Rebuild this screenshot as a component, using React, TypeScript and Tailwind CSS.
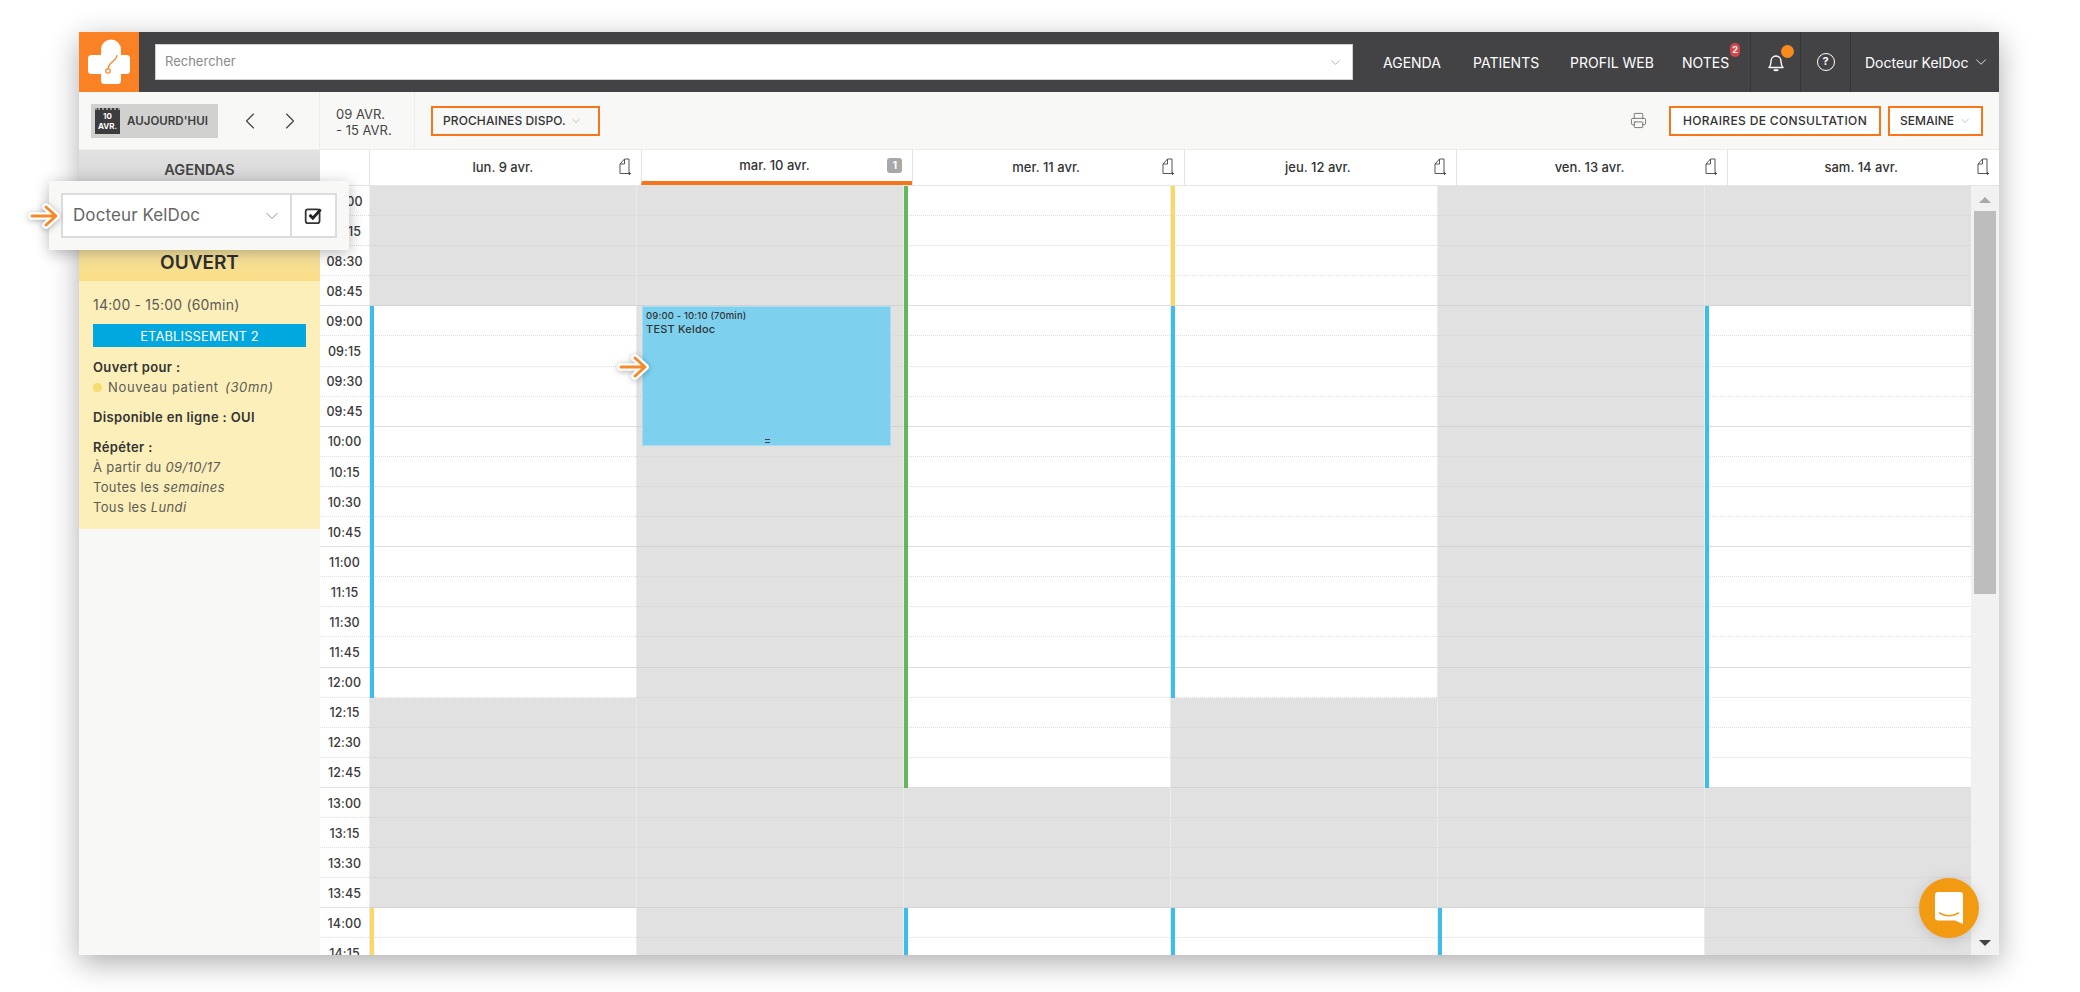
import React from "react";
import { ChevronDown, ChevronLeft, ChevronRight, Printer } from "lucide-react";

const hours = ["08:00","08:15","08:30","08:45","09:00","09:15","09:30","09:45","10:00","10:15","10:30","10:45","11:00","11:15","11:30","11:45","12:00","12:15","12:30","12:45","13:00","13:15","13:30","13:45","14:00","14:15"];
const ROW = 30.1;

type Seg = { from: number; to: number; bar: string };
const days: { label: string; segs: Seg[] }[] = [
  { label: "lun. 9 avr.", segs: [{ from: 4, to: 16, bar: "blue" }, { from: 24, to: 25, bar: "yellow" }] },
  { label: "mar. 10 avr.", segs: [] },
  { label: "mer. 11 avr.", segs: [{ from: 0, to: 19, bar: "green" }, { from: 24, to: 25, bar: "blue" }] },
  { label: "jeu. 12 avr.", segs: [{ from: 0, to: 3, bar: "yellow" }, { from: 4, to: 16, bar: "blue" }, { from: 24, to: 25, bar: "blue" }] },
  { label: "ven. 13 avr.", segs: [{ from: 24, to: 25, bar: "blue" }] },
  { label: "sam. 14 avr.", segs: [{ from: 4, to: 19, bar: "blue" }] },
];

const barClass: Record<string, string> = {
  blue: "bg-[#3fbdea]",
  green: "bg-[#62b85c]",
  yellow: "bg-[#fbd765]",
};

function NoteIcon() {
  return (
    <svg width="12" height="18" viewBox="0 0 12 18" fill="none" stroke="#555" strokeWidth="1">
      <path d="M1 15.500V6l4.500-5H10v14.500H1Z" />
      <path d="M5.500 1v5H1" />
      <path d="M9 15.500h3M10.500 14v3" strokeWidth="1.200" />
    </svg>
  );
}

function Cell({ index, seg }: { index: number; seg?: Seg }) {
  const isHourEnd = index % 4 === 3;
  const line = seg
    ? isHourEnd ? "border-b border-b-[#dddddd]" : "border-b [border-bottom-style:dotted] border-b-[#dedede]"
    : isHourEnd ? "border-b border-b-[#d2d2d2]" : "border-b [border-bottom-style:dotted] border-b-[#d4d4d4]";
  const bg = seg ? "bg-white" : "bg-[#e1e1e1]";
  return <div className={`h-[30.1px] box-border shrink-0 border-l border-l-[#ebebeb] ${bg} ${line}`} />;
}

function Arrow({ className }: { className: string }) {
  return (
    <svg className={`${className} drop-shadow-[0_1px_3px_rgba(0,0,0,0.3)]`} width="34" height="30" viewBox="0 0 34 30" fill="none" strokeLinecap="round" strokeLinejoin="round">
      <g stroke="#ffffff" strokeWidth="7.500">
        <path d="M5 15h23M19 6l10 9-10 9" />
      </g>
      <g stroke="#f58a2c" strokeWidth="3">
        <path d="M5 15h23M19 6l10 9-10 9" />
      </g>
    </svg>
  );
}

function Boxed({ children, className }: { children: React.ReactNode; className: string }) {
  return (
    <div className={`h-[30px] box-border border-2 border-[#f8751a] flex items-center text-[12px] font-medium text-[#333] ${className}`}>
      {children}
    </div>
  );
}

export default function App() {
  return (
    <div className="w-[2080px] h-[992px] overflow-hidden bg-white pt-[32px] pl-[79px] [font-family:Inter,sans-serif]">
      <div className="relative w-[1920px] h-[923px] flex flex-col bg-[#f8f8f6] shadow-[0_8px_28px_rgba(0,0,0,0.32)]">
        {/* Top bar */}
        <header className="h-[60px] shrink-0 flex bg-[#434345] text-white">
          <div className="w-[60px] bg-[#fb8224] flex items-center justify-center">
            <svg width="60" height="60" viewBox="0 0 60 60">
              <circle cx="32" cy="17.500" r="10" fill="#fff" />
              <rect x="9" y="23" width="42" height="19" rx="3.500" fill="#fff" />
              <rect x="22" y="18" width="20" height="34" rx="3.500" fill="#fff" />
              <path fill="none" stroke="#fb8224" strokeWidth="1.200" d="M38 23c0 4-3 5-6 8-2 2-3 4-3 6" />
              <circle cx="29" cy="39" r="2.200" fill="#fff" stroke="#fb8224" strokeWidth="1.200" />
            </svg>
          </div>
          <div className="flex-1 flex items-center pl-[16px]">
            <div className="w-[1198px] h-[36px] box-border bg-white border border-[#cfcfcf] flex items-center justify-between pl-[9px] pr-[9px]">
              <span className="text-[13px] text-[#8a8a8a]">Rechercher</span>
              <ChevronDown size={15} strokeWidth={1} className="text-[#888]" />
            </div>
            <nav className="flex items-center text-[14px] ml-[30px]">
              <span className="w-[60px] whitespace-nowrap">AGENDA</span>
              <span className="ml-[30px] w-[66px] whitespace-nowrap">PATIENTS</span>
              <span className="ml-[31px] w-[87px] whitespace-nowrap">PROFIL WEB</span>
              <span className="relative ml-[25px] w-[48px] whitespace-nowrap">
                NOTES
                <span className="absolute left-[48px] -top-[9px] w-[10px] h-[14px] rounded-full bg-[#d9444b] text-[9px] leading-[14px] font-bold text-center">2</span>
              </span>
            </nav>
            <div className="ml-[20px] h-[60px] w-[50px] border-l border-[#353537] flex items-center justify-center relative">
              <svg width="20" height="20" viewBox="0 0 20 20" fill="none" stroke="#fff" strokeWidth="1.400">
                <path d="M3 15.500c1.500-1.500 2-3 2-6 0-3 2-5.500 5-5.500s5 2.500 5 5.500c0 3 .5 4.500 2 6H3Z" strokeLinejoin="round" />
                <path d="M8 17.500c.5 1 3.500 1 4 0" strokeWidth="2" />
              </svg>
              <span className="absolute left-[30px] top-[13px] w-[13px] h-[13px] rounded-full bg-[#f98a1e]" />
            </div>
            <div className="h-[60px] w-[50px] border-l border-[#353537] flex items-center justify-center">
              <span className="w-[18px] h-[18px] box-border rounded-full border-[1.500px] border-white text-[11px] leading-[15px] font-bold text-center">?</span>
            </div>
            <div className="h-[60px] flex-1 border-l border-[#353537] flex items-center pl-[14px] text-[14px] whitespace-nowrap">
              Docteur KelDoc
              <ChevronDown size={18} strokeWidth={1.100} className="ml-[3px]" />
            </div>
          </div>
        </header>

        {/* Toolbar */}
        <div className="h-[58px] shrink-0 flex items-center bg-[#f8f8f6] border-b border-[#ececea]">
          <div className="w-[241px] h-full flex items-center pl-[12px] border-r border-[#ececea]">
            <div className="w-[127px] h-[34px] bg-[#d1d1cf] flex items-center pl-[4px]">
              <div className="w-[25px] h-[26px] bg-[#3c3c3e] border-t-2 border-dotted border-[#9a9a9a] text-white text-[8px] leading-[10px] font-bold text-center pt-[1px]">
                <div>10</div>
                <div>AVR.</div>
              </div>
              <span className="ml-[7px] mt-[2px] text-[11.500px] font-semibold tracking-[0.05px] text-[#3c3c3e] whitespace-nowrap">AUJOURD'HUI</span>
            </div>
            <ChevronLeft size={28} strokeWidth={1} className="ml-[18px] text-[#444]" />
            <ChevronRight size={28} strokeWidth={1} className="ml-[12px] text-[#444]" />
          </div>
          <div className="w-[95px] h-full box-border flex items-center pl-[16px] pt-[2px] border-r border-[#ececea] text-[13px] leading-[16px] text-[#444]">
            <div>
              <div>09 AVR.</div>
              <div>- 15 AVR.</div>
            </div>
          </div>
          <Boxed className="ml-[16px] w-[169px] pl-[10px] bg-[#f8f8f6] tracking-[0.1px] whitespace-nowrap">
            PROCHAINES DISPO.
            <ChevronDown size={12} strokeWidth={1} className="ml-[4px] text-[#888]" />
          </Boxed>
          <div className="flex-1" />
          <Printer size={17} strokeWidth={1.200} className="text-[#666] mr-[22px]" />
          <Boxed className="w-[212px] bg-white justify-center tracking-[0.35px] whitespace-nowrap">HORAIRES DE CONSULTATION</Boxed>
          <Boxed className="ml-[7px] mr-[16px] w-[95px] bg-white pl-[10px] whitespace-nowrap">
            SEMAINE
            <ChevronDown size={12} strokeWidth={1} className="ml-[5px] text-[#888]" />
          </Boxed>
        </div>

        {/* Main */}
        <div className="flex-1 min-h-0 flex overflow-hidden">
          <aside className="w-[241px] shrink-0 flex flex-col bg-[#f8f8f6]">
            <div className="h-[95px] shrink-0 bg-gradient-to-b from-[#e3e3e3] to-[#bdbdbd] text-center text-[14.500px] font-semibold text-[#444] pt-[9px]">AGENDAS</div>
            <div className="h-[36px] shrink-0 bg-gradient-to-b from-[#f8e7a6] to-[#f9dc84] flex items-center justify-center text-[19px] font-semibold text-[#2f2f2f]">OUVERT</div>
            <div className="h-[248px] shrink-0 bg-[#fdefb9] px-[14px] pt-[14px] text-[13px] text-[#5b5b55] leading-[20px]">
              <div className="text-[14px] tracking-[0.2px]">14:00 - 15:00 (60min)</div>
              <div className="mt-[9px] h-[23px] bg-[#00a8df] text-white text-[13px] leading-[24px] text-center tracking-[0.1px]">ETABLISSEMENT 2</div>
              <div className="mt-[10px] font-semibold text-[#333] tracking-[0.35px]">Ouvert pour :</div>
              <div className="flex items-center tracking-[0.65px]">
                <span className="w-[9px] h-[9px] rounded-full bg-[#f6dc6c] mr-[6px]" />
                <span>Nouveau patient <i className="ml-[2px]">(30mn)</i></span>
              </div>
              <div className="mt-[10px] font-semibold text-[#333] tracking-[0.35px]">Disponible en ligne : OUI</div>
              <div className="mt-[10px] font-semibold text-[#333] tracking-[0.35px]">Répéter :</div>
              <div className="tracking-[0.35px]">À partir du <i>09/10/17</i></div>
              <div className="tracking-[0.35px]">Toutes les <i>semaines</i></div>
              <div className="tracking-[0.35px]">Tous les <i>Lundi</i></div>
            </div>
          </aside>

          <div className="flex-1 min-w-0 flex flex-col bg-white">
            {/* Day headers */}
            <div className="h-[36px] shrink-0 flex border-b border-[#e5e5e5] bg-white">
              <div className="w-[49px] shrink-0" />
              {days.map((d, i) => (
                <div key={d.label} className={`flex-1 box-border relative flex items-center justify-center pr-[5px] border-l border-[#e3e3e3] text-[13px] font-medium text-[#333] ${i === 1 ? "border-b-[4px] border-b-[#f8751a]" : ""}`}>
                  {d.label}
                  <span className="absolute right-[10px] top-[8px]">
                    {i === 1 ? (
                      <span className="block w-[15px] h-[15px] rounded-[3px] bg-[#a8a8a8] text-white text-[10px] leading-[15px] font-bold text-center">1</span>
                    ) : (
                      <NoteIcon />
                    )}
                  </span>
                </div>
              ))}
            </div>

            {/* Grid */}
            <div className="flex-1 min-h-0 flex overflow-hidden">
              <div className="w-[49px] shrink-0 bg-white">
                {hours.map((h, i) => (
                  <div key={h} className={`h-[30.1px] box-border flex items-center justify-center pt-[3px] text-[12.500px] font-medium tracking-[0.1px] text-[#3a3a3a] border-b ${i % 4 === 3 ? "border-[#e2e2e2]" : "[border-bottom-style:dotted] border-[#dcdcdc]"}`}>{h}</div>
                ))}
              </div>
              {days.map((d, di) => (
                <div key={d.label} className="w-[267px] shrink-0 relative">
                  {hours.map((h, i) => (
                    <Cell key={h} index={i} seg={d.segs.find((s) => i >= s.from && i <= s.to)} />
                  ))}
                  {d.segs.map((s) => (
                    <div
                      key={s.from}
                      className={`absolute left-[1px] w-[4px] ${barClass[s.bar]}`}
                      style={{ top: s.from * ROW, height: (s.to - s.from + 1) * ROW }}
                    />
                  ))}
                  {di === 1 && (
                    <div className="absolute left-[6px] top-[120px] w-[249px] h-[140px] box-border bg-[#7dd1ef] border border-[#a9def2] pl-[3px] pt-[2px] text-[#333]">
                      <div className="text-[9.500px] leading-[13px] font-medium tracking-[0.15px]">09:00 - 10:10 (70min)</div>
                      <div className="text-[11px] leading-[14px] font-medium tracking-[0.2px]">TEST Keldoc</div>
                      <div className="absolute left-[122px] bottom-[2px] w-[5px] h-[4px] border-y border-[#444]" />
                    </div>
                  )}
                </div>
              ))}
              {/* Scrollbar */}
              <div className="flex-1 bg-[#f1f1f1] flex flex-col items-center relative pt-[11px]">
                <div className="w-0 h-0 border-x-[6px] border-x-transparent border-b-[6px] border-b-[#a8a8a8]" />
                <div className="mt-[8px] w-[22px] h-[383px] bg-[#bdbdbd]" />
                <div className="absolute bottom-[9px] w-0 h-0 border-x-[6px] border-x-transparent border-t-[6px] border-t-[#444]" />
              </div>
            </div>
          </div>
        </div>

        {/* Floating select popup */}
        <div className="absolute left-[-30px] top-[149px] w-[300px] h-[69px] box-border bg-[#f8f8f6] shadow-[0_3px_14px_rgba(0,0,0,0.28)] pl-[12px] pt-[12px]">
          <div className="w-[276px] h-[45px] box-border border-2 border-[#dcdcdc] bg-white flex">
            <div className="w-[229px] flex items-center justify-between pl-[10px] pr-[8px] border-r-2 border-[#dcdcdc] text-[17px] text-[#666] tracking-[0.1px]">
              Docteur KelDoc
              <ChevronDown size={20} strokeWidth={1} className="text-[#777]" />
            </div>
            <div className="flex-1 flex items-center justify-center">
              <svg width="20" height="20" viewBox="0 0 18 18" fill="none">
                <rect x="1.500" y="3" width="12.500" height="12.500" rx="2" stroke="#333" strokeWidth="1.600" />
                <path d="M5 8l3 3 7-8" stroke="#222" strokeWidth="2.600" />
              </svg>
            </div>
          </div>
        </div>

        <Arrow className="absolute left-[-52px] top-[169px]" />
        <Arrow className="absolute left-[537px] top-[320px]" />

        {/* Chat button */}
        <div className="absolute left-[1840px] top-[846px] w-[60px] h-[60px] rounded-full bg-[#f39a13] flex items-center justify-center shadow-[0_2px_14px_rgba(0,0,0,0.15)]">
          <svg width="28" height="32" viewBox="0 0 28 32">
            <path fill="#fff" d="M3 0h22a3 3 0 0 1 3 3v29l-8-3.500H3a3 3 0 0 1-3-3V3a3 3 0 0 1 3-3Z" />
            <path fill="none" stroke="#f39a13" strokeWidth="1.500" strokeLinecap="round" d="M4.500 21c5.500 3.500 13.500 3.500 19 0" />
          </svg>
        </div>
      </div>
    </div>
  );
}
